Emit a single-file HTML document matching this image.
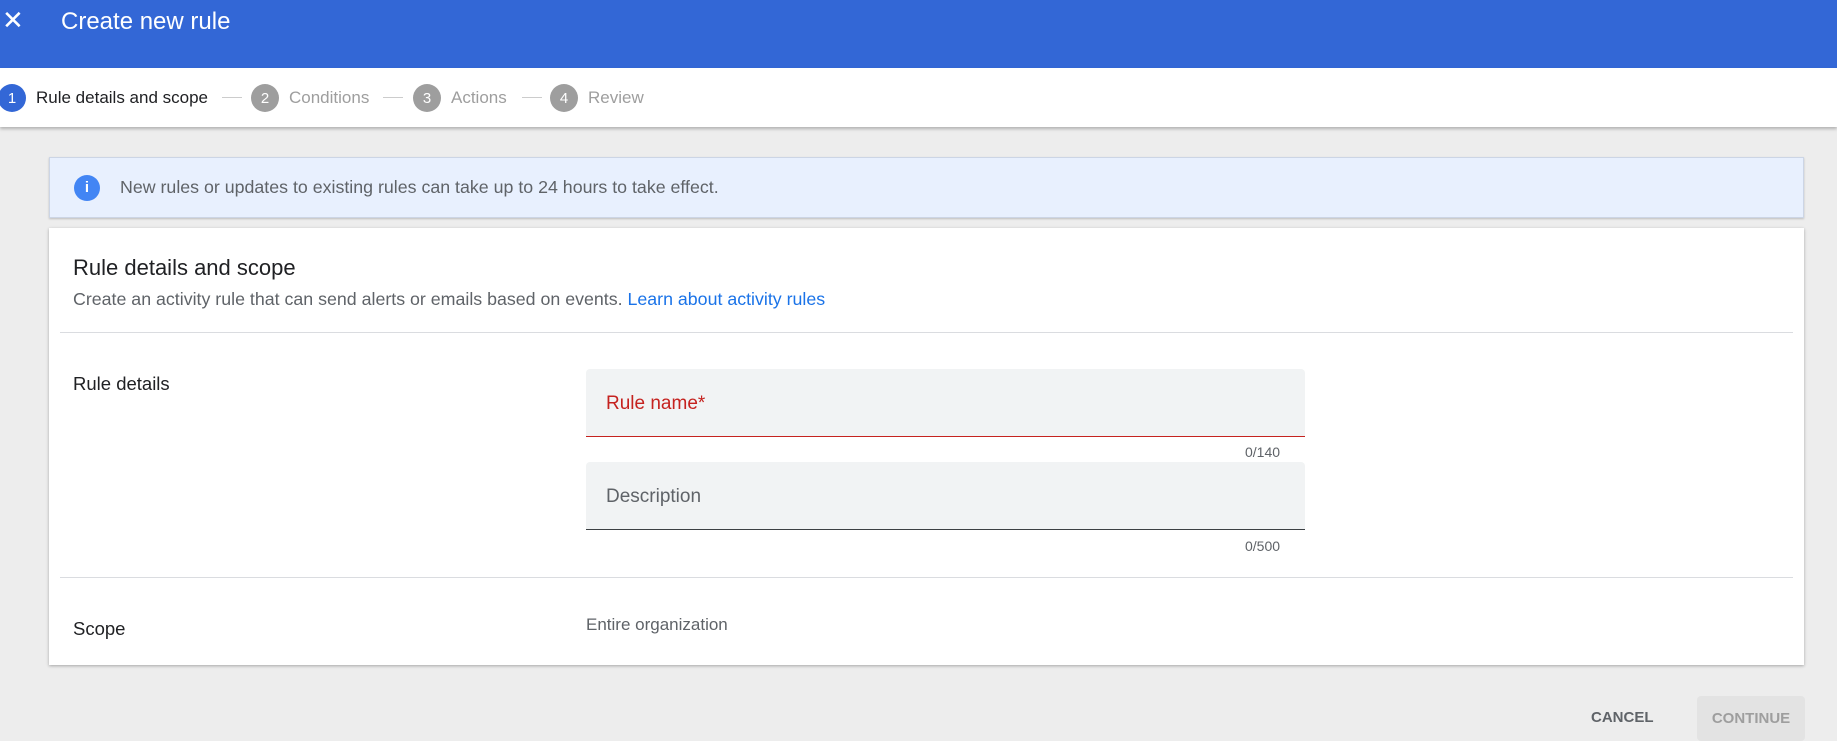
<!DOCTYPE html>
<html><head><style>
*{box-sizing:border-box;margin:0;padding:0}
body{width:1837px;height:741px;overflow:hidden;background:#ededed;font-family:"Liberation Sans",Roboto,sans-serif;position:relative}
.hdr{position:absolute;left:0;top:0;width:1837px;height:68px;background:#3367d6}
.hdr .t{position:absolute;left:61px;top:8px;color:#fff;font-size:24px}
.hdr .x{position:absolute;left:2px;top:5px;color:#fff;font-size:26px}
.step{position:absolute;left:0;top:68px;width:1837px;height:59px;background:#fff;box-shadow:0 2px 3px rgba(0,0,0,.25)}
.s{position:absolute;top:16px;height:28px;display:flex;align-items:center;font-size:17px;color:#9e9e9e}
.c{width:28px;height:28px;border-radius:50%;background:#9e9e9e;color:#fff;font-size:15px;display:flex;align-items:center;justify-content:center;margin-right:10px}
.ln{position:absolute;top:29px;height:1px;width:20px;background:#ccc}
.info{position:absolute;left:49px;top:157px;width:1755px;height:61px;background:#e8f0fe;border:1px solid #ccd5e5;box-shadow:0 1px 2px rgba(0,0,0,.2)}
.info .i{position:absolute;left:24px;top:17px;width:26px;height:26px;border-radius:50%;background:#4285f4;color:#fff;font-weight:bold;font-size:15px;text-align:center;line-height:26px}
.info .tx{position:absolute;left:70px;top:19px;font-size:17.8px;color:#5f6368}
.card{position:absolute;left:49px;top:228px;width:1755px;height:437px;background:#fff;box-shadow:0 1px 3px rgba(0,0,0,.3)}
.abs{position:absolute}
.fld{position:absolute;left:537px;width:719px;height:68px;background:#f1f3f4;border-radius:4px 4px 0 0}
.cnt{position:absolute;font-size:14px;color:#5f6368}
</style></head><body>
<div class="hdr"><span class="x">✕</span><span class="t">Create new rule</span></div>
<div class="step">
<div class="s" style="left:-2px;color:#202124"><span class="c" style="background:#3367d6">1</span>Rule details and scope</div>
<div class="ln" style="left:222px"></div>
<div class="s" style="left:251px"><span class="c">2</span>Conditions</div>
<div class="ln" style="left:383px"></div>
<div class="s" style="left:413px"><span class="c">3</span>Actions</div>
<div class="ln" style="left:522px"></div>
<div class="s" style="left:550px"><span class="c">4</span>Review</div>
</div>
<div class="info"><div class="i">i</div><div class="tx">New rules or updates to existing rules can take up to 24 hours to take effect.</div></div>
<div class="card">
<div class="abs" style="left:24px;top:27px;font-size:22px;color:#202124">Rule details and scope</div>
<div class="abs" style="left:24px;top:61px;font-size:17.8px;color:#5f6368">Create an activity rule that can send alerts or emails based on events. <span style="color:#1a73e8">Learn about activity rules</span></div>
<div class="abs" style="left:11px;top:104px;width:1733px;height:1px;background:#dadce0"></div>
<div class="abs" style="left:24px;top:145px;font-size:18.5px;color:#202124">Rule details</div>
<div class="fld" style="top:141px;border-bottom:1px solid #c5221f"><span class="abs" style="left:20px;top:24px;font-size:19px;color:#c5221f">Rule name*</span></div>
<div class="cnt" style="left:1196px;top:216px">0/140</div>
<div class="fld" style="top:234px;border-bottom:1px solid #3c4043"><span class="abs" style="left:20px;top:24px;font-size:19px;color:#5f6368">Description</span></div>
<div class="cnt" style="left:1196px;top:310px">0/500</div>
<div class="abs" style="left:11px;top:349px;width:1733px;height:1px;background:#dadce0"></div>
<div class="abs" style="left:24px;top:390px;font-size:18.5px;color:#202124">Scope</div>
<div class="abs" style="left:537px;top:387px;font-size:17px;color:#5f6368">Entire organization</div>
</div>
<div class="abs" style="left:1591px;top:709px;font-size:15px;font-weight:bold;color:#5f6368">CANCEL</div>
<div class="abs" style="left:1697px;top:696px;width:108px;height:45px;background:#e3e3e3;border-radius:4px;font-size:15px;font-weight:bold;color:#9e9e9e;text-align:center;line-height:45px">CONTINUE</div>
</body></html>
